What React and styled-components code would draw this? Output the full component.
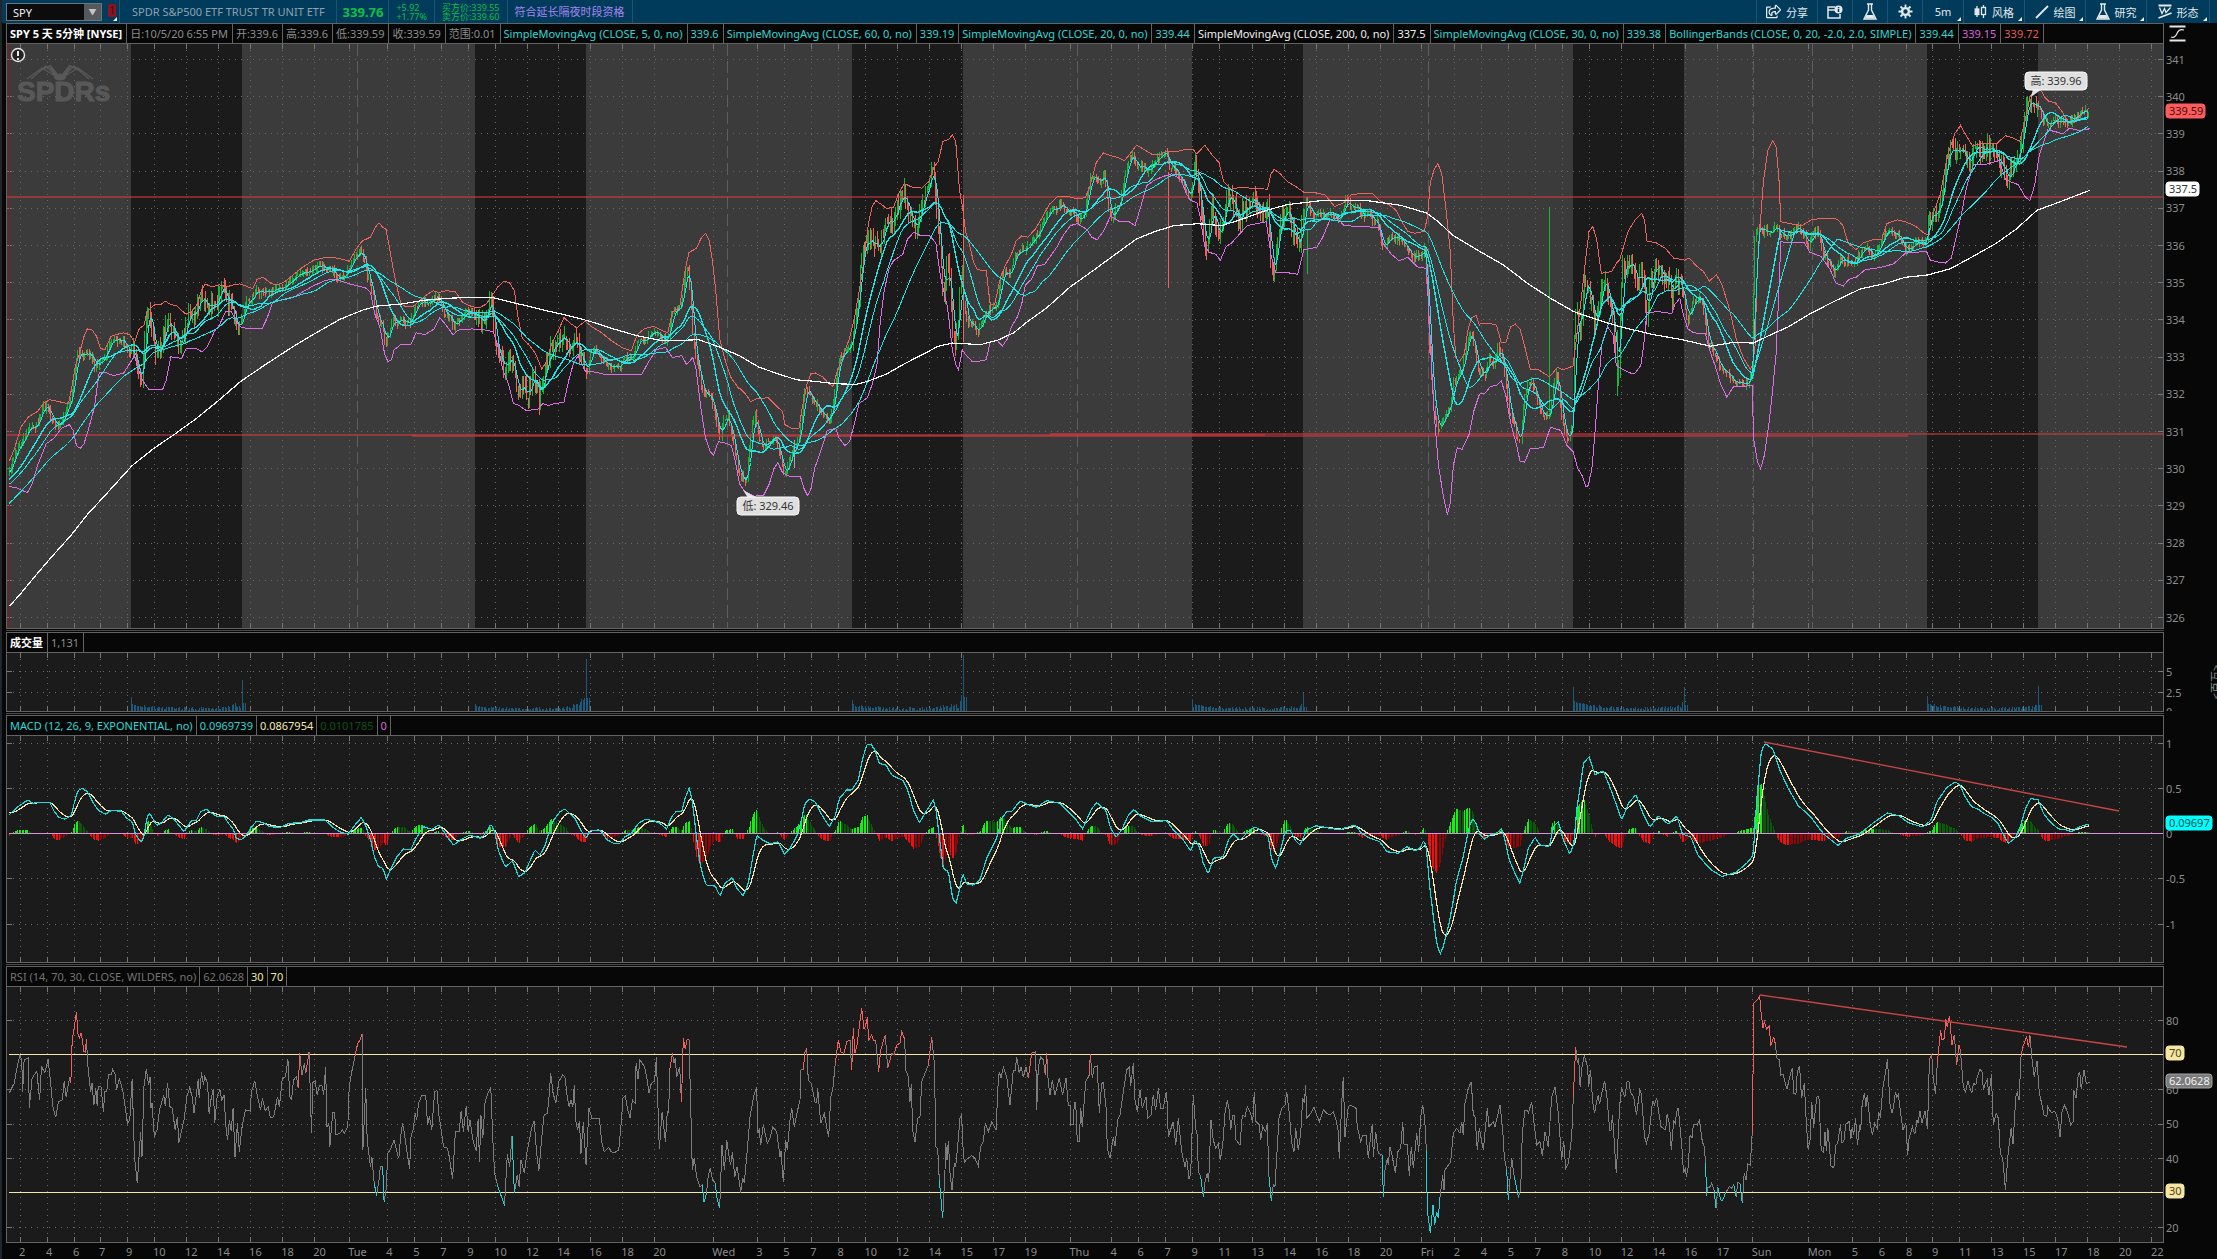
import styled, { createGlobalStyle } from "styled-components";
import { FaRegShareSquare } from "react-icons/fa";

const GlobalStyle = createGlobalStyle`
  :root {
    --toolbar: #003b5b;
    --toolbar-line: #1d5270;
    --ink: #070707;
    --plot: #1b1b1b;
    --line: #636363;
    --gray: #8c8c8c;
    --cyan: #2fd6d6;
    --green: #0fc043;
    --cream: #f3e7ae;
    --violet: #d864dc;
    --red: #e45b56;
  }
  * {
    box-sizing: border-box;
  }
  body {
    margin: 0;
    background: var(--ink);
    font-family: "Noto Sans", "Noto Sans CJK SC", sans-serif;
    font-size: 11px;
  }
  button,
  input {
    font: inherit;
  }
`;

/* ---------- data ---------- */

// Every series is kept as chunks: origin, scale, then "x,y x,y ..." pairs.
const chunk = (ox, kx, oy, ky, text) =>
  text
    .trim()
    .split(/\s+/)
    .map((pair) => {
      const [x, y] = pair.split(",").map(Number);
      return [ox + x / kx, oy + y / ky];
    });

const priceA = (text) => chunk(0, 2.119, 40, 2.613, text);
const priceB = (text) => chunk(740, 2.119, 40, 2.613, text);
const priceC = (text) => chunk(1480, 2.1275, 40, 2.613, text);

const closePoints = [
  ...priceA(`-170,1330 -60,1190 20,1125 30,1080 45,1050 60,1015 75,1010 85,985 90,960 100,960 112,1000 125,1000 135,985 148,950 155,890 162,820 172,820 180,825
    190,815 200,850 212,840 222,835 230,790 245,785 262,785 275,815 285,810 293,890 300,880 305,800 310,700 316,710 322,770 328,815 335,800
    345,780 355,730 362,740 370,775 380,800 390,770 398,720 410,725 420,690 432,665 440,690 450,690 460,680 470,660 478,675 490,700 497,740
    505,750 513,720 520,690 530,680 540,655 550,665 565,655 580,660 595,650 610,630 625,620 640,605 655,600 670,590 690,590 705,605 715,620
    730,615 742,590 752,565 765,548 772,580 778,620 788,660 798,730 808,740 815,800 822,770 830,730 840,740 850,720 860,745 870,735 880,700
    890,680 905,690 920,670 930,670 940,710 950,720 962,750 972,730 985,715 1000,715 1012,740 1025,730 1035,690 1042,670 1050,790 1058,830
    1068,860 1078,830 1085,850 1095,930 1105,915 1118,930 1128,880 1135,880 1142,940 1150,890 1158,850 1168,800 1180,800 1190,765 1200,780
    1208,800 1218,770 1228,830 1235,830 1243,870 1250,820 1262,810 1275,830 1285,850 1300,855 1315,850 1325,825 1340,830 1350,790 1362,785
    1375,775 1390,765 1405,785 1415,785 1422,720 1435,700 1443,690 1450,620 1457,585 1462,650 1468,790 1475,840 1485,900 1495,930 1502,925
    1512,960 1520,1010 1525,1050 1532,990 1542,985 1552,1040 1560,1100`),
  ...priceB(`0,1150 5,1140 12,1160 18,1080 25,1000 32,980 38,1040 45,1060 55,1055 65,1050 75,1045 85,1090 92,1140 100,1110 110,1070 118,1060 125,1040
    132,960 138,900 145,930 155,945 165,960 175,975 185,1000 192,985 198,930 205,860 212,830 220,820 230,800 238,790 242,710 250,690 256,560
    263,545 270,520 278,520 285,540 295,550 303,490 310,480 320,480 330,450 340,420 347,400 354,430 362,450 370,500 378,480 386,440 395,400
    403,360 410,335 415,430 420,500 426,610 432,690 438,570 443,590 450,790 456,780 462,720 467,620 470,560 474,700 480,730 487,745 495,740
    503,770 510,740 520,715 530,700 545,690 552,620 562,605 570,625 580,570 592,550 605,550 618,530 632,500 645,470 655,450 668,445 680,430
    690,445 705,450 718,480 728,455 735,410 742,360 752,350 762,380 772,345 780,440 787,465 797,440 805,420 813,360 822,320 832,300 840,340
    850,330 860,345 870,330 880,310 890,305 902,300 912,340 920,335 930,350 940,375 950,420 958,380 963,300 968,360 975,440 983,530 990,540
    1000,440 1010,500 1018,510 1025,440 1035,410 1045,430 1057,480 1065,440 1078,440 1088,405 1098,430 1108,460 1118,440 1124,610 1130,600
    1137,540 1145,480 1153,450 1160,430 1168,490 1180,530 1188,520 1198,410 1207,450 1220,460 1235,450 1255,455 1270,470 1282,420 1295,440
    1305,430 1318,460 1335,460 1350,480 1362,550 1372,520 1385,515 1398,520 1412,540 1425,570 1440,565 1452,545 1457,720 1463,880 1470,960
    1478,1020 1485,1000 1495,970 1502,970 1510,900 1520,880 1530,860 1540,790 1550,760 1558,830 1565,880`),
  ...priceC(`0,850 8,880 18,830 28,850 38,800 48,840 55,900 62,980 70,990 78,1040 85,1050 92,950 100,900 110,890 118,930 128,970 140,990 150,970
    156,890 164,870 170,960 178,1020 186,1050 193,1020 198,960 201,720 208,710 213,780 220,640 228,640 236,680 243,750 252,680 265,620 275,690
    283,720 288,840 293,890 297,720 302,580 310,590 318,580 325,590 335,640 343,580 350,680 356,720 362,640 370,600 380,590 390,630 400,620
    408,680 415,620 425,630 433,670 440,740 450,690 460,680 470,670 477,720 483,790 492,800 502,830 512,860 522,865 532,880 545,895 560,900
    572,890 579,870 582,530 590,490 600,500 615,500 628,490 640,505 655,515 665,500 680,490 692,520 700,540 708,500 718,500 726,550 740,580
    752,610 765,575 780,575 795,585 808,555 820,540 835,560 850,545 862,500 870,490 882,510 892,510 902,545 915,545 930,530 948,530 953,470
    962,460 972,470 982,400 990,330 1000,290 1010,300 1020,285 1032,315 1045,300 1060,285 1075,285 1090,290 1102,310 1112,340 1118,370
    1128,345 1138,300 1148,290 1156,210 1163,180 1170,160 1180,190 1188,170 1198,215 1210,215 1225,215 1240,215 1255,215 1268,200 1280,185
    1295,190`),
];

const upperBand = [
  ...priceA(`20,1100 30,1070 45,1010 60,985 80,970 92,950 105,940 125,945 145,950 152,910 160,850 168,820 178,775 185,755 195,757 205,775 213,805
    222,810 235,775 245,770 262,765 275,770 285,790 295,755 305,745 312,710 320,700 330,690 342,690 350,682 360,690 375,695 392,715 405,712
    418,690 428,650 435,638 450,645 465,640 480,645 495,640 508,637 525,645 535,650 545,625 558,620 575,637 590,640 605,630 620,615 640,595
    665,575 690,568 715,570 740,578 755,545 768,525 785,515 795,490 803,478 810,488 818,495 825,540 832,590 840,640 850,690 860,697 875,697
    890,680 905,665 918,655 930,660 945,655 965,658 980,685 1000,697 1015,700 1030,690 1042,670 1055,645 1068,630 1080,635 1090,655 1097,720
    1107,780 1120,795 1135,820 1148,860 1158,840 1170,790 1183,760 1195,725 1208,740 1222,752 1240,735 1255,750 1275,765 1295,785 1320,805
    1338,812 1350,770 1365,755 1385,748 1405,760 1415,765 1425,710 1440,700 1452,600 1460,555 1475,545 1487,515 1495,505 1503,525 1510,580
    1517,660 1525,780 1535,830 1548,880 1565,910`),
  ...priceB(`0,910 15,930 22,945 35,937 60,935 80,960 90,970 95,1005 110,1015 125,1015 132,960 142,900 150,872 160,870 175,880 188,898 197,905 205,870
    220,820 232,780 242,730 252,660 260,600 272,480 280,435 288,420 300,430 310,440 325,437 337,400 348,375 365,385 385,387 400,370 412,330
    420,318 430,265 442,260 450,248 457,265 465,390 472,440 478,500 485,530 495,580 503,600 522,603 530,690 540,690 552,620 562,590 575,560
    585,525 597,512 610,515 625,495 640,465 655,430 672,410 690,408 715,415 732,412 742,380 755,320 770,295 785,302 800,307 815,315 825,300
    840,275 855,285 875,300 890,300 905,290 925,292 945,285 960,285 968,298 985,275 1000,300 1015,320 1025,370 1040,390 1060,385 1080,387
    1100,388 1118,390 1125,350 1132,338 1145,350 1160,370 1180,385 1195,398 1215,398 1240,405 1260,435 1280,425 1295,405 1320,400 1340,400
    1355,420 1375,430 1390,445 1405,480 1415,500 1430,505 1450,500 1457,460 1463,370 1472,335 1479,323 1487,350 1495,430 1505,550 1512,750
    1517,830 1525,840 1535,820 1542,760 1550,725 1560,720 1567,745`),
  ...priceC(`0,742 20,740 35,745 45,790 55,790 65,750 75,742 85,755 95,800 107,860 125,862 148,880 165,855 175,862 198,852 205,780 215,680 225,570
    232,500 240,487 248,520 258,610 280,605 292,580 297,575 303,550 315,500 330,470 344,453 350,470 355,525 375,530 395,545 412,570 435,575
    445,570 460,590 475,605 488,630 503,613 515,640 530,700 545,780 560,830 575,860 580,850 585,800 590,600 597,470 603,370 612,290 623,262
    630,280 636,360 640,475 660,480 685,485 705,470 730,465 760,468 772,485 783,530 800,548 815,530 835,522 855,520 865,480 888,470 905,475
    925,485 945,505 955,510 965,450 980,400 995,300 1010,245 1022,223 1032,245 1048,277 1070,270 1100,270 1118,250 1132,255 1148,265
    1160,210 1170,150 1180,130 1190,125 1202,150 1210,160 1225,165 1240,190 1250,212 1265,215 1280,195 1297,177`),
];

const lowerBand = [
  ...priceA(`20,1167 35,1170 58,1183 68,1160 80,1110 98,1055 115,1040 130,1015 147,1005 155,1020 162,1060 170,1067 178,1055 188,1015 200,960 210,870
    222,868 240,877 262,870 275,845 285,825 293,860 302,890 315,912 345,912 352,890 362,828 385,832 395,805 415,805 428,815 440,800 455,760
    465,745 478,710 490,710 500,735 512,752 555,755 565,730 578,685 595,680 625,670 660,645 690,628 712,625 740,637 775,648 785,660 795,720
    805,750 815,820 822,840 830,835 835,810 850,795 870,797 882,765 900,770 920,755 932,725 945,745 960,770 970,758 1000,755 1025,757 1045,762
    1055,800 1065,860 1078,900 1088,950 1100,955 1115,968 1140,965 1150,950 1162,955 1175,950 1195,947 1205,890 1215,845 1225,825 1240,865
    1262,868 1285,875 1325,875 1360,873 1375,840 1390,810 1410,803 1425,830 1445,825 1455,848 1468,830 1475,860 1485,960 1495,1040 1505,1075
    1512,1085 1522,1050 1535,1052 1550,1060 1558,1100 1567,1160`),
  ...priceB(`10,1180 30,1192 50,1190 62,1160 72,1120 80,1105 90,1130 105,1140 128,1140 135,1170 143,1190 150,1175 158,1120 172,1070 185,1020 203,1015
    210,1040 222,1060 232,1050 243,1000 252,950 270,935 280,900 290,850 297,740 305,660 315,600 325,577 345,560 355,520 368,503 385,512
    402,512 415,530 425,620 440,700 450,810 458,850 463,862 471,810 480,825 492,840 505,840 522,835 530,790 545,785 556,800 567,780 575,750
    587,725 597,690 605,640 618,625 630,590 645,587 658,565 672,540 685,510 700,485 715,480 735,495 745,515 757,522 770,500 785,460 805,475
    825,475 837,485 848,440 862,380 880,365 900,355 915,350 935,365 945,400 955,420 968,425 975,460 985,540 995,555 1008,560 1018,575
    1030,540 1042,530 1060,505 1075,485 1095,480 1115,475 1125,560 1135,607 1160,608 1182,612 1195,548 1222,542 1235,515 1250,470 1265,465
    1280,485 1310,487 1355,490 1362,530 1380,560 1397,577 1415,568 1435,593 1455,597 1460,720 1470,960 1480,1110 1490,1190 1499,1240
    1505,1210 1512,1110 1520,1065 1530,1070 1545,1030 1555,970 1567,925`),
  ...priceC(`0,925 12,922 22,905 35,903 45,890 55,930 65,1000 78,1060 85,1100 95,1103 107,1068 135,1065 150,1012 172,1020 185,1060 198,1075 208,1120
    218,1140 225,1167 230,1165 238,1120 245,1020 252,900 260,790 272,750 283,770 290,850 300,858 320,870 330,870 342,850 348,800 355,712
    380,710 408,715 415,690 425,675 433,720 442,755 455,765 480,768 487,805 500,850 512,900 525,933 540,905 560,905 579,903 582,1040
    590,1100 597,1120 605,1085 615,1000 622,920 630,820 635,680 640,527 660,530 690,530 702,555 725,565 745,600 757,635 773,643 785,625
    800,620 820,600 850,595 880,585 905,557 950,552 958,575 975,580 990,583 1003,570 1012,520 1025,450 1035,385 1050,325 1075,325 1105,315
    1118,365 1145,378 1160,410 1170,420 1180,380 1190,300 1200,265 1208,235 1225,240 1240,245 1255,230 1275,237 1297,232`),
];

const average200 = [
  ...priceA(`20,1480 45,1445 75,1400 110,1350 150,1295 185,1240 230,1180 280,1112 325,1068 370,1030 415,990 460,945 510,892 560,850 620,802 670,765
    720,730 770,705 800,695 850,690 900,680 950,675 1000,672 1045,673 1090,687 1150,705 1210,722 1250,735 1300,755 1350,773 1400,785
    1440,785 1480,783 1520,800 1567,825`),
  ...priceB(`40,855 80,872 120,888 160,892 200,898 245,900 270,892 310,873 350,845 390,820 420,800 450,792 510,796 545,785 580,765 610,735 650,700
    700,645 740,610 790,565 840,520 880,500 920,485 970,480 1020,485 1060,470 1110,447 1160,430 1230,420 1330,420 1400,432 1455,452
    1480,475 1510,510 1567,552`),
  ...priceC(`50,588 100,635 150,675 200,710 260,735 300,750 370,770 430,783 490,800 540,790 582,792 610,775 655,750 700,717 750,685 810,650
    860,637 905,620 952,614 1000,598 1050,565 1100,530 1140,495 1185,445 1240,420 1297,393`),
];

const macdPoints = [
  ...chunk(0, 2.8, 620, 3, `25,585 50,560 78,540 90,550 110,547 140,548 152,575 165,592 182,598 200,585 210,540 218,512 230,505 245,515 262,550
    275,570 295,583 310,572 340,573 355,595 370,605 380,645 396,667 402,655 412,590 420,580 430,600 440,617 455,605 470,585 485,595 500,615
    515,635 525,620 535,603 550,600 562,575 578,567 590,578 610,590 628,590 640,610 652,625 662,655 675,660 690,645 705,620 718,604 735,607
    755,620 785,622 810,610 840,608 865,600 910,600 930,620 950,635 975,643 990,620 1012,592 1025,620 1038,660 1048,710 1060,740 1072,745
    1082,777 1095,745 1110,712 1130,687 1150,690 1165,655 1185,620 1210,628 1228,615 1240,630 1255,655 1270,675 1290,660 1315,645 1345,655
    1360,640 1375,612 1385,635 1395,690 1415,742 1435,722 1452,770 1470,758 1485,720 1498,690 1512,705 1525,680 1545,610`),
  ...chunk(550, 3, 730, 3, `10,272 30,245 45,237 60,252 75,265 95,305 108,325 120,302 145,300 155,305 170,328 190,340 210,340 225,320 245,310 265,280
    285,268 310,272 330,280 350,298 365,260 380,243 395,245 405,205 418,173 428,220 438,310 450,400 460,440 470,467 495,467 510,498 525,460
    547,443 560,475 580,497 595,460 605,400 620,317 635,328 660,342 685,335 703,373 720,355 740,320 752,280 765,220 778,207 795,215 810,245
    825,270 838,290 855,260 868,205 890,180 905,180 925,150 938,85 950,45 962,42 975,60 988,100 1008,105 1025,135 1060,152 1075,185
    1090,240 1108,278 1125,250 1150,210 1158,240 1168,320 1180,415 1195,425 1208,505 1218,520 1228,480 1238,430 1250,462 1270,465 1290,450
    1310,385 1340,325 1355,265 1370,245 1385,245 1410,213 1430,222 1460,232 1490,212 1530,220`),
  ...chunk(1060, 3, 730, 3, `5,225 20,240 45,265 68,297 80,270 95,235 112,217 125,232 138,240 150,290 168,322 185,300 205,255 222,238 240,257
    275,275 320,272 340,300 370,330 392,362 405,330 418,350 430,400 445,432 460,385 490,380 505,330 520,312 540,330 565,305 585,290 600,300
    625,320 635,390 648,415 660,370 675,305 690,300 705,330 720,345 740,300 768,287 800,293 840,300 860,292 885,285 905,310 930,325 960,335
    980,365 1015,370 1040,350 1065,362 1080,355 1092,330 1100,360 1108,460 1120,560 1130,640 1140,673 1150,650 1165,590 1175,540 1190,450
    1210,380 1225,300 1237,265 1248,280 1258,310 1272,328 1290,315 1310,310 1325,295 1335,330 1348,390 1365,430 1380,460 1395,400 1405,355
    1425,322 1440,345 1468,350 1480,290 1495,275 1510,330 1530,373 1542,340 1550,240 1560,175`),
  ...chunk(0, 0.7073, 0, 0.7073, `1120,540 1124,535 1128,548 1134,545 1140,560 1147,580 1152,568 1157,562 1162,575 1167,585 1173,577 1180,583 1186,577
    1190,590 1196,592 1201,605 1210,615 1218,620 1228,617 1236,610 1240,605 1243,560 1246,530 1249,526 1254,530 1259,545 1265,558 1272,570
    1280,577 1290,590 1300,598 1306,593 1315,590 1325,582 1335,575 1343,577 1350,582 1360,585 1366,580 1370,567 1377,557 1383,553`),
  ...chunk(1960, 3, 620, 3, `0,495 15,530 35,560 55,568 75,582 95,592 115,612 128,640 145,670 165,655 180,625 195,570 212,535 235,540 250,580
    270,605 295,627 320,630 335,635 355,622 375,615 388,614`),
];

const rsiPoints = [
  ...chunk(0, 2.119, 960, 3, `20,398 30,370 35,330 42,285 46,300 48,395 51,300 60,293 62,443 68,355 78,333 84,420 88,320 95,338 102,298 106,350
    112,440 118,472 124,425 132,420 136,363 140,410 148,350 150,370 153,240 157,205 162,157 165,220 168,235 172,218 178,275 181,277 183,238
    187,330 192,395 195,370 199,435 203,385 206,437 208,380 214,380 219,455 222,395 226,395 230,343 236,343 239,328 244,343 247,390 253,357
    260,390 265,440 270,490 275,480 280,357 285,590 291,670 298,517 301,590 305,380 310,328 315,375 318,350 320,445 322,430 327,528 333,510
    338,450 347,405 350,437 355,370 360,440 365,445 371,510 376,472 379,548 385,510 390,480 396,410 402,382 407,410 411,458 415,415 420,357
    422,415 427,337 431,375 434,350 440,370 443,462 447,420 452,387 455,490 460,410 466,388 470,420 475,405 478,490 482,540 486,480 490,512
    494,445 498,592 503,490 507,575 513,500 520,450 530,453 533,395 540,362 545,405 552,450 556,415 562,452 568,440 573,473 580,470 588,410
    592,440 598,357 605,350 610,297 614,410 618,418 622,360 628,350 632,385 635,280 640,345 645,310 648,340 655,275 660,520 663,368 668,362
    672,405 677,375 682,375 686,405 690,320 693,500 697,490 699,560 705,458 709,458 712,525 720,520 726,510 730,520 737,500 740,380 746,330
    752,290 758,250 763,240 767,222 769,570 775,385 778,540 785,620 788,590 793,670 798,707 803,660 806,620 811,620 814,727 818,690 822,580
    828,565 835,540 840,570 845,595 849,530 853,490 857,520 861,560 868,628 871,530 876,505 880,460 883,480 887,430 894,405 902,405 906,495
    910,468 915,510 921,395 926,392 930,465 935,510 940,560 948,565 952,590 959,658 965,515 973,515 977,453 982,515 988,438 992,515 996,480
    1002,540 1009,572 1013,478 1016,605 1019,465 1023,535 1028,425 1034,400 1040,382 1044,530 1048,640 1054,675 1062,708 1069,737 1075,583
    1080,620 1085,527 1090,700 1096,645 1100,680 1104,600 1111,640 1117,575 1122,540 1126,505 1132,482 1137,580 1142,632 1148,530 1153,465
    1160,460 1163,420 1167,340 1172,400 1178,430 1184,365 1192,345 1197,350 1202,410 1206,440 1210,420 1214,440 1217,375 1220,480 1224,510
    1228,483 1231,583 1236,485 1242,615 1248,443 1254,475 1270,475 1275,545 1280,575 1290,562 1295,575 1302,578 1311,570 1317,480 1320,415
    1325,407 1330,450 1335,473 1340,420 1346,430 1348,308 1352,358 1356,300 1366,320 1372,365 1375,400 1380,370 1387,363 1391,292 1397,568
    1403,455 1410,545 1414,455 1417,457 1419,330 1425,280 1428,310 1431,295 1434,350 1440,320 1444,425 1448,235 1452,268 1456,238 1460,240
    1463,400 1467,630 1471,595 1476,650 1483,680 1488,675 1492,727 1497,700 1500,655 1505,625 1510,660 1515,668 1520,720 1525,743 1530,555
    1535,630 1540,540 1545,590 1548,615 1552,577 1557,650 1562,620 1567,670`),
  ...chunk(550, 3, 730, 3, `572,1388 578,1345 583,1360 592,1260 600,1160 612,1095 620,1070 623,1210 628,1200 632,1245 640,1185 652,1240 660,1225
    668,1190 680,1205 690,1280 693,1262 700,1357 707,1230 712,1260 720,1170 725,1135 733,1190 742,1145 750,1110 753,1020 760,1018 765,965
    770,955 775,1050 783,1060 788,1080 795,1117 800,1117 803,1075 812,1180 823,1150 828,1180 836,1222 842,1100 848,1080 856,1000 865,930
    872,965 882,970 890,935 900,930 905,1020 910,895 915,970 922,940 928,890 935,835 942,898 947,885 952,862 956,930 965,915 970,930
    977,932 982,985 986,1025 992,960 998,940 1006,915 1013,1015 1025,970 1032,975 1040,945 1050,940 1055,905 1064,928 1067,1020 1075,1040
    1080,1115 1084,1062 1088,1200 1095,1235 1103,1165 1110,1160 1115,1055 1125,1030 1135,1005 1145,922 1153,1000 1158,1250 1163,1258
    1168,1350 1178,1465 1185,1320 1187,1240 1191,1290 1195,1232 1200,1330 1206,1380 1213,1300 1217,1310 1222,1260 1230,1165 1235,1155
    1238,1240 1243,1298 1250,1288 1265,1277 1275,1285 1285,1308 1292,1250 1300,1235 1306,1180 1315,1205 1325,1175 1338,1200 1345,1050
    1348,1025 1353,1045 1360,1012 1370,1040 1380,1125 1390,1020 1396,1020 1400,980 1408,1030 1413,1010 1420,1042 1428,1010 1435,1045
    1445,970 1457,965 1460,1140 1465,1010 1472,980 1480,990 1486,1035 1490,970 1495,1060 1500,1095 1507,1050 1515,1095 1528,1045 1538,1095
    1548,1045 1555,1125`),
  ...chunk(1060, 3, 730, 3, `30,1125 33,1183 40,1183 43,1118 47,1118 52,1235 58,1235 62,1133 67,1190 77,1055 88,1035 91,972 97,1045 103,1010 112,1008
    118,1150 125,1060 130,1058 138,1130 142,1255 150,1285 160,1222 165,1248 173,1170 180,1155 190,1085 200,1020 208,1012 212,1068 220,1000
    225,1110 232,1145 240,1080 247,1135 258,1100 263,1165 273,1155 280,1095 287,1140 295,1075 302,1135 310,1135 317,1090 320,1088 325,1220
    340,1175 347,1245 355,1165 365,1265 375,1310 380,1285 387,1348 392,1330 400,1095 407,1195 412,1215 415,1325 422,1340 430,1400 436,1350
    442,1330 446,1355 453,1170 460,1230 467,1255 475,1240 481,1290 488,1245 495,1150 502,1110 508,1140 512,1200 518,1155 523,1155 528,1230
    540,1245 547,1155 555,1160 562,1130 572,1150 578,1180 583,1085 588,1175 598,1185 602,1230 608,1190 617,1205 622,1180 627,1340 634,1413
    640,1365 645,1370 652,1250 657,1165 665,1135 675,1125 680,1085 688,1150 695,1240 702,1265 707,1195 715,1260 722,1210 728,1105 733,1118
    737,1065 740,1165 752,1150 762,1130 770,1155 778,1175 790,1140 800,1150 810,1155 820,1145 828,1170 834,1200 838,1285 845,1120 850,1040
    855,1220 865,1130 872,1125 888,1135 892,1190 902,1235 908,1215 918,1215 925,1283 933,1210 937,1183 940,1280 947,1205 955,1270 967,1275
    970,1400 975,1320 982,1285 985,1305 990,1250 997,1280 1006,1328 1013,1265 1022,1255 1028,1175 1032,1242 1042,1242 1048,1338 1054,1250
    1060,1315 1070,1210 1076,1265 1082,1160 1088,1125 1094,1165 1099,1260 1102,1440 1111,1510 1119,1425 1124,1485 1130,1445 1135,1465
    1140,1400 1148,1335 1152,1380 1155,1320 1172,1295 1180,1210 1190,1195 1200,1210 1205,1175 1210,1215 1215,1120 1225,1075 1234,1055
    1240,1155 1245,1160 1252,1260 1258,1195 1270,1260 1282,1135 1287,1190 1300,1175 1305,1190 1320,1125 1328,1200 1333,1280 1340,1320
    1345,1410 1355,1285 1363,1340 1375,1400 1382,1380 1387,1210 1395,1140 1402,1140 1405,1150 1415,1115 1422,1180 1430,1245 1440,1235
    1447,1278 1455,1205 1465,1250 1475,1100 1485,1070 1495,1150 1505,1290 1511,1232 1517,1315 1525,1300 1535,1220 1540,1100 1547,950
    1552,1000 1556,985`),
  ...chunk(1480, 2.1275, 960, 3, `213,380 217,320 222,288 229,320 231,382 235,330 240,430 244,460 248,425 252,405 254,433 265,362 270,410 276,512
    279,510 282,465 290,640 297,440 301,382 308,412 313,365 317,365 320,395 327,412 333,465 340,390 343,400 347,470 350,530 354,550 360,520
    367,425 371,435 376,415 385,500 395,510 398,462 403,490 407,570 412,480 415,490 420,445 422,447 430,570 433,640 437,625 439,652 443,620
    447,525 451,535 454,493 462,495 467,480 473,545 477,560 480,610 482,708 484,683 490,680 493,668 498,690 502,745 506,680 512,720 516,722
    522,700 530,680 536,685 540,675 545,710 548,668 553,670 558,730 562,640 566,660 570,612 575,615 579,520 583,130 590,120 595,108 598,160
    602,203 605,185 610,208 616,197 618,258 625,232 628,250 632,295 637,300 640,345 645,343 653,388 660,345 664,325 668,400 672,405 675,335
    680,318 684,415 690,370 694,480 698,568 702,540 706,427 710,503 714,440 717,410 721,410 726,570 731,578 734,515 737,573 740,503 747,620
    753,622 757,555 761,550 767,493 770,547 774,545 778,493 782,490 785,482 789,537 792,500 795,525 799,475 803,555 808,495 810,510 813,435
    818,398 821,440 824,405 830,490 835,525 840,490 845,505 848,460 852,470 857,385 860,360 867,298 872,430 876,460 880,440 884,395 887,412
    890,403 895,460 900,510 906,488 910,585 913,535 920,500 925,523 930,480 932,490 936,452 940,490 947,452 952,508 956,300 961,282 964,350
    969,403 973,310 980,210 983,240 988,235 991,177 994,200 999,167 1004,255 1009,225 1014,315 1019,255 1022,270 1028,375 1033,398 1038,363
    1046,400 1050,370 1055,375 1058,350 1064,328 1068,335 1071,390 1075,370 1079,360 1083,405 1088,343 1092,495 1098,460 1103,475 1107,580
    1112,595 1118,690 1123,590 1130,505 1134,553 1140,410 1143,398 1147,420 1151,290 1155,260 1163,230 1167,262 1170,225 1174,290 1179,350
    1185,303 1190,400 1195,430 1200,465 1206,470 1208,440 1215,457 1223,455 1229,475 1234,532 1238,457 1243,435 1250,455 1257,495 1262,485
    1263,390 1268,415 1273,340 1276,337 1279,388 1285,330 1290,372 1297,367`),
];

const BAR = 1.42;
const SESSIONS = [
  { from: 131, to: 242, open: 14, close: 31 },
  { from: 475, to: 586, open: 7, close: 52 },
  { from: 852, to: 963, open: 11, close: 56 },
  { from: 1192, to: 1303, open: 12, close: 18 },
  { from: 1573, to: 1684, open: 24, close: 24 },
  { from: 1927, to: 2038, open: 15, close: 25 },
];

let seed = 7;
const random = () => {
  seed = (seed * 16807) % 2147483647;
  return seed / 2147483647;
};

const resample = (points) => {
  const out = [];
  let i = 0;
  const last = points[points.length - 1][0];
  for (let x = points[0][0]; x <= last; x += BAR) {
    while (i < points.length - 2 && points[i + 1][0] < x) i += 1;
    const [x1, y1] = points[i];
    const [x2, y2] = points[i + 1];
    out.push([x, y1 + ((y2 - y1) * (x - x1)) / (x2 - x1 || 1)]);
  }
  return out;
};

const movingAverage = (series, length) =>
  series
    .map(([x], i) => {
      const part = series.slice(Math.max(0, i - length + 1), i + 1);
      return [x, part.reduce((sum, p) => sum + p[1], 0) / part.length];
    })
    .filter(([x]) => x >= 9);

const inSession = (x) => SESSIONS.some((s) => x >= s.from && x < s.to);

const closes = resample(closePoints).map(([x, y]) => [
  x,
  y + (random() - 0.5) * (inSession(x) ? 14 : 6),
]);

const candles = closes
  .map(([x, close], i) => {
    const open = i ? closes[i - 1][1] : close;
    const reach = inSession(x) ? 11 : 5;
    return {
      x: Math.round(x) + 0.5,
      up: close < open,
      top: Math.min(open, close) - random() * reach,
      bottom: Math.max(open, close) + random() * reach,
    };
  })
  .filter(({ x }) => x >= 9);

const macdLine = resample(macdPoints);
const signalLine = macdLine.reduce((out, [x, y], i) => {
  const before = i ? out[i - 1][1] : 812;
  out.push([x, before + (y - before) * 0.2]);
  return out;
}, []);
const ZERO = 833.5;
const histogram = macdLine.map(([x, y], i) => {
  const value = signalLine[i][1] - y;
  const before = i ? signalLine[i - 1][1] - macdLine[i - 1][1] : value;
  const growing = Math.abs(value) >= Math.abs(before);
  return {
    x,
    value,
    color: value > 0 ? (growing ? "#11f211" : "#0a5a0a") : growing ? "#f01010" : "#8c0808",
  };
});

const volumes = SESSIONS.flatMap(({ from, to, open, close }) => {
  const bars = [];
  for (let x = from; x < to + 3; x += BAR) {
    const t = (x - from) / (to - from);
    let h = 1 + random() * 3 + open * 0.3 * Math.exp(-t * 6) + close * 0.35 * Math.exp((t - 1) * 12) * random();
    if (x === from) h = open;
    if (x <= to && x + BAR > to) h = close;
    if (t > 1) h = close / 4;
    bars.push([x, h]);
  }
  return bars;
});

// single bars that reach far out of the crowd
const SPIKES = [
  { x: 963.5, y1: 195, y2: 342, color: "#f0645c" },
  { x: 1168.5, y1: 172, y2: 288, color: "#f0645c" },
  { x: 1307.5, y1: 230, y2: 274, color: "#14b83a" },
  { x: 1549.5, y1: 207, y2: 412, color: "#14b83a" },
  { x: 1617.5, y1: 330, y2: 396, color: "#14b83a" },
  { x: 794.5, y1: 440, y2: 468, color: "#a8a8a8" },
];

const TICKS = [
  [20, "2"], [47, "4"], [74, "6"], [100, "7"], [127, "9"], [154, "10"], [186, "12"], [218, "14"], [250, "16"], [282, "18"], [314, "20"],
  [349, "Tue"], [387, "4"], [414, "5"], [441, "7"], [468, "9"], [495, "10"], [527, "12"], [558, "14"], [590, "16"], [622, "18"], [654, "20"],
  [713, "Wed"], [757, "3"], [784, "5"], [811, "7"], [838, "8"], [865, "10"], [897, "12"], [929, "14"], [961, "15"], [993, "17"], [1025, "19"],
  [1070, "Thu"], [1111, "4"], [1138, "6"], [1165, "7"], [1192, "9"], [1219, "11"], [1252, "13"], [1284, "14"], [1316, "16"], [1348, "18"],
  [1380, "20"], [1421, "Fri"], [1454, "2"], [1481, "4"], [1508, "5"], [1535, "7"], [1562, "8"], [1589, "10"], [1621, "12"], [1653, "14"],
  [1685, "16"], [1717, "17"], [1752, "Sun"], [1808, "Mon"], [1852, "5"], [1879, "6"], [1906, "8"], [1932, "9"], [1959, "11"], [1991, "13"],
  [2023, "15"], [2055, "17"], [2087, "18"], [2119, "20"], [2151, "22"],
];
const DAYS = [357, 727, 1077, 1428, 1753, 1812];

const priceY = (value) => 59.5 + (341 - value) * 37.2;
const rsiY = (value) => 1020.5 + (80 - value) * 3.45;

const MAIN = { top: 44, height: 584 };
const VOLUME = { top: 653, height: 58 };
const MACD = { top: 736, height: 226 };
const RSI = { top: 987, height: 255 };
const LEFT = 7;
const WIDTH = 2156;

const priceLabels = Array.from({ length: 16 }, (_, i) => ({ text: String(341 - i), y: priceY(341 - i) }));
const volumeLabels = [
  { text: "5", y: 671.5 },
  { text: "2.5", y: 692.5 },
  { text: "0", y: 712 },
];
const macdLabels = [
  { text: "1", y: 743.5 },
  { text: "0.5", y: 788.5 },
  { text: "0", y: 833.5 },
  { text: "-0.5", y: 878.5 },
  { text: "-1", y: 924.5 },
];
const rsiLabels = [80, 60, 50, 40, 20].map((v) => ({ text: String(v), y: rsiY(v) }));

/* ---------- layout ---------- */

const Page = styled.div`
  display: flex;
  flex-direction: column;
  height: 100vh;
  min-height: 640px;
  overflow: hidden;
  background: var(--ink);
  border-left: 2px solid #1f272b;
  color: var(--gray);
`;

const Toolbar = styled.header`
  display: flex;
  flex: none;
  height: 23px;
  padding-left: 4px;
  background: var(--toolbar);
  color: #d5dde2;
  white-space: nowrap;
`;

const SymbolBox = styled.form`
  display: flex;
  align-items: stretch;
  width: 96px;
  height: 18px;
  margin-top: 3px;
  border: 1px solid #6a7780;
  background: #0c0c0c;

  input {
    flex: 1;
    min-width: 0;
    padding: 0 0 0 6px;
    border: 0;
    outline: 0;
    background: none;
    color: #f0f0f0;
  }
  button {
    width: 17px;
    padding: 0;
    border: 0;
    background: #55595b;
    color: #c4c4c4;
    font-size: 8px;
    line-height: 16px;
  }
`;

const LinkGroup = styled.button`
  display: flex;
  position: relative;
  width: 18px;
  padding: 4px 3px 6px 6px;
  border: 0;
  border-right: 1px solid var(--toolbar-line);
  background: none;
  color: #3a0a0e;

  span {
    flex: 1;
    border-radius: 1px;
    background: #8c1420;
    font-size: 10px;
    line-height: 12px;
  }
`;

const Corner = styled.i`
  position: absolute;
  right: 2px;
  bottom: 2px;
  border-left: 4px solid transparent;
  border-bottom: 4px solid #f2f2f2;
`;

const Quote = styled.div`
  display: flex;
  flex-direction: column;
  justify-content: center;
  padding: ${({ $pad }) => $pad || "0 7px"};
  border-right: 1px solid var(--toolbar-line);
  color: ${({ $color }) => $color};
  font-size: ${({ $size }) => $size || 11}px;
  font-weight: ${({ $bold }) => ($bold ? 700 : 400)};
  line-height: ${({ $line }) => $line || 22}px;
`;

const Tools = styled.nav`
  display: flex;
  margin-left: auto;
  margin-right: 7px;
  border-left: 1px solid var(--toolbar-line);
`;

const ToolButton = styled.button`
  display: flex;
  position: relative;
  align-items: center;
  justify-content: center;
  gap: 5px;
  width: ${({ $width }) => $width}px;
  padding: 0;
  border: 0;
  border-right: 1px solid var(--toolbar-line);
  background: none;
  color: #e4e9ec;

  svg {
    flex: none;
  }
`;

const PanelBox = styled.section`
  display: grid;
  grid-template-columns: minmax(0, 1fr) 53px;
  flex: ${({ $grow }) => $grow} 1 22px;
  min-height: 0;
  margin-left: 4px;
`;

const Frame = styled.div`
  display: flex;
  flex-direction: column;
  min-height: 0;
  border: 1px solid var(--line);
`;

const Divider = styled.div`
  flex: none;
  height: 3px;
  margin: 0 53px 0 4px;
  border-top: 1px solid var(--ink);
  border-bottom: 1px solid var(--ink);
  background: #4a4a4a;
`;

const StudyBar = styled.div`
  display: flex;
  flex: none;
  height: 20px;
  overflow: hidden;
  border-bottom: 1px solid var(--line);
  background: var(--ink);
`;

const StudyCell = styled.span`
  padding: 0 ${({ $tight }) => ($tight ? 3 : 4)}px 0 3px;
  border-right: 1px solid var(--line);
  color: ${({ $color }) => $color || "var(--gray)"};
  font-weight: ${({ $bold }) => ($bold ? 700 : 400)};
  line-height: 19px;
  white-space: nowrap;
`;

const Plot = styled.svg`
  display: block;
  flex: 1;
  width: 100%;
  min-height: 0;
  background: var(--plot);
`;

const AxisColumn = styled.div`
  display: flex;
  flex-direction: column;
  min-height: 0;
`;

const AxisHead = styled.div`
  flex: none;
  height: 21px;
  padding: 2px 0 0 5px;
`;

const ScaleButton = styled.button`
  display: block;
  padding: 0;
  border: 0;
  background: none;
  color: #e6e6e6;
`;

const AxisScale = styled.svg`
  display: block;
  flex: 1;
  width: 100%;
  min-height: 0;
  margin-bottom: 1px;

  text {
    fill: var(--gray);
  }
`;

const TimeScale = styled.svg`
  display: block;
  flex: none;
  width: calc(100% - 58px);
  height: 16px;
  margin-left: 4px;
  overflow: visible;

  text {
    fill: var(--gray);
  }
`;

/* ---------- drawing ---------- */

const path = (points) => "M" + points.map(([x, y]) => `${x.toFixed(1)} ${y.toFixed(1)}`).join("L");

const Line = ({ points, color, width = 1 }) => (
  <path d={path(points)} fill="none" stroke={color} strokeWidth={width} shapeRendering="crispEdges" />
);

const Grid = ({ top, height, levels, dots = "#686868" }) => {
  const bottom = top + height;
  const d = TICKS.map(([x]) => `M${x + 0.5} ${top}V${bottom}`).join("");
  const ends = TICKS.map(([x]) => `M${x + 0.5} ${top}v5M${x + 0.5} ${bottom}v-5`).join("");
  const rows = levels.map((y) => Math.floor(y) + 0.5);
  return (
    <g fill="none" shapeRendering="crispEdges">
      <path d={d} stroke={dots} strokeDasharray="1 5" />
      <path d={rows.map((y) => `M${LEFT} ${y}H${LEFT + WIDTH}`).join("")} stroke={dots} strokeDasharray="1 5" />
      <path d={ends} stroke="#777" />
      <path d={rows.map((y) => `M${LEFT} ${y}h5M${LEFT + WIDTH} ${y}h-5`).join("")} stroke="#777" />
    </g>
  );
};

const Canvas = ({ area, label, children }) => (
  <Plot viewBox={`${LEFT} ${area.top} ${WIDTH} ${area.height}`} preserveAspectRatio="none" role="img" aria-label={label}>
    {children}
  </Plot>
);

const Callout = ({ x, y, tip, text }) => (
  <g>
    <path d={tip} fill="#e0e0e0" />
    <rect x={x} y={y} width="62" height="18" rx="4" fill="#e0e0e0" stroke="#fafafa" />
    <text x={x + 31} y={y + 13} textAnchor="middle" fill="#333">
      {text}
    </text>
  </g>
);

const PriceChart = () => (
  <Canvas area={MAIN} label="SPY 5 分钟">
    <rect x={LEFT} y={MAIN.top} width={WIDTH} height={MAIN.height} fill="#3b3b3b" />
    {SESSIONS.map(({ from, to }) => (
      <rect key={from} x={from} y={MAIN.top} width={to - from} height={MAIN.height} fill="#1b1b1b" />
    ))}
    <Grid {...MAIN} levels={priceLabels.map((l) => l.y)} />
    <path
      d={DAYS.map((x) => `M${x + 0.5} ${MAIN.top}v${MAIN.height}`).join("")}
      stroke="#5e5e5e"
      strokeDasharray="12 5"
      shapeRendering="crispEdges"
    />
    <g fill="#585858" stroke="#585858">
      <text x="17" y="101" fontFamily="Liberation Sans, sans-serif" fontSize="28" fontWeight="700" strokeWidth="1">
        SPDRs
      </text>
      <ellipse cx="60" cy="77" rx="6" ry="3" />
      <path
        d="M55 76L42 68 27 79M55 75L46 66 31 79M56 75L49 66 38 72M57 74L50 65M65 76L78 68 93 79M65 75L74 66 89 79M64 75L71 66 82 72M63 74L70 65"
        fill="none"
        strokeWidth="1.3"
      />
    </g>
    <circle cx="18" cy="55" r="6.5" fill="#222" stroke="#e8e8e8" strokeWidth="1.4" />
    <path d="M18 51v5M18 58v2" stroke="#fff" strokeWidth="1.8" />
    <path d="M9.5 44V628" stroke="#8a1a1c" shapeRendering="crispEdges" />
    <g shapeRendering="crispEdges">
      {candles.map(({ x, up, top, bottom }, i) => (
        <path key={i} d={`M${x} ${top.toFixed(1)}V${bottom.toFixed(1)}`} stroke={up ? "#14b83a" : "#f0645c"} />
      ))}
      {SPIKES.map(({ x, y1, y2, color }) => (
        <path key={x} d={`M${x} ${y1}V${y2}`} stroke={color} />
      ))}
    </g>
    <g stroke="#d03a3e" strokeOpacity="0.75" strokeWidth="1.6">
      <path d="M7 197H2163" />
      <path d="M7 435H1265" />
      <path d="M412 436H1908" />
      <path d="M1050 434H2163" />
    </g>
    <Line points={upperBand} color="#e8665f" />
    <Line points={lowerBand} color="#dc6fe6" />
    <Line points={movingAverage(closes, 60)} color="#1fe5e5" />
    <Line points={movingAverage(closes, 30)} color="#1fe5e5" />
    <Line points={movingAverage(closes, 20)} color="#1fe5e5" width={1.4} />
    <Line points={movingAverage(closes, 5)} color="#1fe5e5" />
    <Line points={average200} color="#fff" width={1.2} />
    <Callout x={2025} y={72} tip="M2031 97L2033 89H2042Z" text="高: 339.96" />
    <Callout x={737} y={497} tip="M743 490L748 498H757Z" text="低: 329.46" />
  </Canvas>
);

const VolumeChart = () => (
  <Canvas area={VOLUME} label="成交量">
    <Grid {...VOLUME} levels={[671, 692]} />
    <path
      d={volumes.map(([x, h]) => `M${Math.round(x) + 0.5} 711v-${h.toFixed(1)}`).join("")}
      stroke="#1b5a7c"
      shapeRendering="crispEdges"
    />
  </Canvas>
);

const MacdChart = () => (
  <Canvas area={MACD} label="MACD">
    <Grid {...MACD} levels={[743.5, 788.5, 878.5, 924.5]} />
    <g shapeRendering="crispEdges">
      {histogram.map(({ x, value, color }) => (
        <path key={x} d={`M${Math.round(x) + 0.5} ${ZERO}v${(-value).toFixed(1)}`} stroke={color} />
      ))}
      <path d={`M9 ${ZERO}H2163`} stroke="#dc8fdc" />
    </g>
    <Line points={signalLine} color="#f3e3b4" width={1.2} />
    <Line points={macdLine} color="#1fd8d8" width={1.2} />
    <path d="M1764 742L2119 811" stroke="#c94545" strokeWidth="1.3" />
  </Canvas>
);

// a bar takes the colour of the zone in which it ends
const rsiZone = (test) =>
  rsiPoints
    .slice(1)
    .map((p, i) => [rsiPoints[i], p])
    .filter(([, end]) => test(end[1]))
    .map(path)
    .join("");

const RsiChart = () => (
  <Canvas area={RSI} label="RSI">
    <Grid {...RSI} levels={rsiLabels.map((l) => l.y)} />
    <path d="M9 1054.5H2163M9 1192.5H2163" stroke="#f3e7ae" shapeRendering="crispEdges" />
    <Line points={rsiPoints} color="#7d7d7d" />
    <g fill="none" shapeRendering="crispEdges">
      <path d={rsiZone((y) => y < rsiY(70))} stroke="#f0605c" />
      <path d={rsiZone((y) => y > rsiY(30))} stroke="#22cfd2" />
    </g>
    <path d="M1760 995L2127 1047" stroke="#c94545" strokeWidth="1.4" />
  </Canvas>
);

/* ---------- parts ---------- */

const Tag = ({ y, text, width, fill, color, edge }) => (
  <svg y={y} overflow="visible">
    <rect x="2" y="-7" width={width} height="14" rx="3" fill={fill} stroke={edge || fill} />
    <text x="5" y="4" style={{ fill: color }}>
      {text}
    </text>
  </svg>
);

const Panel = ({ area, studies, tight, labels, tags = [], unit, head, children }) => {
  const at = (y) => `${((y - area.top) / area.height) * 100}%`;
  return (
    <PanelBox $grow={area.height}>
      <Frame>
        <StudyBar>
          {studies.map(([text, color, bold], i) => (
            <StudyCell key={i} $color={color} $bold={bold} $tight={tight}>
              {text}
            </StudyCell>
          ))}
        </StudyBar>
        {children}
      </Frame>
      <AxisColumn>
        <AxisHead>{head}</AxisHead>
        <AxisScale>
          {labels.map(({ text, y }) => (
            <text key={text} x="2" y={at(y)} dy="4">
              {text}
            </text>
          ))}
          {tags.map((tag) => (
            <Tag key={tag.text} {...tag} y={at(tag.y)} />
          ))}
          {unit && (
            <svg y="50%" overflow="visible">
              <text x="0" y="0" textAnchor="middle" transform="translate(56 0) rotate(-90)">
                {unit}
              </text>
            </svg>
          )}
        </AxisScale>
      </AxisColumn>
    </PanelBox>
  );
};

const FlaskIcon = () => (
  <svg width="14" height="17" viewBox="0 0 14 17" fill="none" stroke="currentColor" strokeWidth="1.4">
    <path d="M4 1h6M5.5 1v6L1 16h12L8.5 7V1" />
    <path d="M3.5 12h7l1.5 3.5H2Z" fill="currentColor" stroke="none" />
  </svg>
);

const InfoWindowIcon = () => (
  <svg width="16" height="14" viewBox="0 0 16 14" fill="none" stroke="currentColor" strokeWidth="1.5">
    <path d="M8 2H1v11h12V9M1 5h7" />
    <circle cx="11.5" cy="4.5" r="4" fill="currentColor" stroke="none" />
    <path d="M11.5 2v1.2M11.5 4v3" stroke="#003b5b" />
  </svg>
);

const GearIcon = () => (
  <svg width="15" height="15" viewBox="0 0 15 15" fill="none" stroke="currentColor">
    <circle cx="7.5" cy="7.5" r="3.4" strokeWidth="2.4" />
    <path
      d="M7.5 0.5v3M7.5 11.5v3M0.5 7.5h3M11.5 7.5h3M2.5 2.5l2 2M10.5 10.5l2 2M12.5 2.5l-2 2M4.5 10.5l-2 2"
      strokeWidth="1.8"
    />
  </svg>
);

const CandleIcon = () => (
  <svg width="13" height="15" viewBox="0 0 13 15" fill="none" stroke="currentColor" strokeWidth="1.3">
    <path d="M3 2v11M9.5 1v13" />
    <rect x="1.2" y="5" width="3.6" height="5.5" fill="currentColor" />
    <rect x="7.5" y="3.5" width="4" height="7" fill="#003b5b" />
  </svg>
);

const SlashIcon = () => (
  <svg width="14" height="14" viewBox="0 0 14 14">
    <path d="M1 13L13 1" stroke="currentColor" strokeWidth="1.8" />
  </svg>
);

const PatternIcon = () => (
  <svg width="14" height="15" viewBox="0 0 14 15" fill="none" stroke="currentColor" strokeWidth="1.3">
    <path d="M0.5 1.5h13M0.5 14l13-5" strokeWidth="1.8" />
    <path d="M1.5 3.5l2.5 6 2.5-5 1.5 4 4.5-5" />
  </svg>
);

const CurveIcon = () => (
  <svg width="17" height="17" viewBox="0 0 17 17" fill="none" stroke="currentColor">
    <path d="M0.5 1.5h16M0.5 15.5h16" strokeWidth="2" />
    <path d="M2 12c3 1 4.500 0 6-3.500S11.500 4 15 5" strokeWidth="1.2" />
  </svg>
);

const tools = [
  { name: "分享", text: "分享", icon: <FaRegShareSquare size={15} />, width: 61 },
  { name: "消息", icon: <InfoWindowIcon />, width: 35 },
  { name: "实验", icon: <FlaskIcon />, width: 35 },
  { name: "设置", icon: <GearIcon />, width: 35 },
  { name: "周期", text: "5m", width: 41, menu: true },
  { name: "风格", text: "风格", icon: <CandleIcon />, width: 61, menu: true },
  { name: "绘图", text: "绘图", icon: <SlashIcon />, width: 61, menu: true },
  { name: "研究", text: "研究", icon: <FlaskIcon />, width: 61, menu: true },
  { name: "形态", text: "形态", icon: <PatternIcon />, width: 63, menu: true },
];

const cyan = "var(--cyan)";
const priceStudies = [
  ["SPY 5 天 5分钟 [NYSE]", "#fff", true],
  ["日:10/5/20 6:55 PM"],
  ["开:339.6"],
  ["高:339.6"],
  ["低:339.59"],
  ["收:339.59"],
  ["范围:0.01"],
  ["SimpleMovingAvg (CLOSE, 5, 0, no)", cyan],
  ["339.6", cyan],
  ["SimpleMovingAvg (CLOSE, 60, 0, no)", cyan],
  ["339.19", cyan],
  ["SimpleMovingAvg (CLOSE, 20, 0, no)", cyan],
  ["339.44", cyan],
  ["SimpleMovingAvg (CLOSE, 200, 0, no)", "#eee"],
  ["337.5", "#eee"],
  ["SimpleMovingAvg (CLOSE, 30, 0, no)", cyan],
  ["339.38", cyan],
  ["BollingerBands (CLOSE, 0, 20, -2.0, 2.0, SIMPLE)", cyan],
  ["339.44", cyan],
  ["339.15", "var(--violet)"],
  ["339.72", "var(--red)"],
];

const App = () => (
  <Page>
    <GlobalStyle />
    <Toolbar>
      <SymbolBox onSubmit={(e) => e.preventDefault()}>
        <input aria-label="代码" defaultValue="SPY" />
        <button type="button" aria-label="最近的代码">
          ▼
        </button>
      </SymbolBox>
      <LinkGroup type="button">
        <span>1</span>
        <Corner />
      </LinkGroup>
      <Quote $color="#8fa1ad" $pad="0 11px 0 12px">
        SPDR S&amp;P500 ETF TRUST TR UNIT ETF
      </Quote>
      <Quote $color="var(--green)" $size={13} $bold $pad="0 5px 0 6px">
        339.76
      </Quote>
      <Quote $color="var(--green)" $size={9} $line={9}>
        <span>+5.92</span>
        <span>+1.77%</span>
      </Quote>
      <Quote $color="var(--green)" $size={9} $line={9}>
        <span>买方价:339.55</span>
        <span>卖方价:339.60</span>
      </Quote>
      <Quote $color="#a884f0" $size={11}>
        符合延长隔夜时段资格
      </Quote>
      <Tools>
        {tools.map(({ name, text, icon, width, menu }) => (
          <ToolButton key={name} type="button" aria-label={name} $width={width}>
            {icon}
            {text}
            {menu && <Corner />}
          </ToolButton>
        ))}
      </Tools>
    </Toolbar>

    <Panel
      area={MAIN}
      studies={priceStudies}
      labels={priceLabels}
      tags={[
        { text: "339.59", y: 111, width: 39, fill: "#fb5c5c", color: "#4a0f0f" },
        { text: "337.5", y: 189, width: 33, fill: "#fff", color: "#333" },
      ]}
      head={
        <ScaleButton type="button" aria-label="刻度">
          <CurveIcon />
        </ScaleButton>
      }
    >
      <PriceChart />
    </Panel>
    <Divider />
    <Panel area={VOLUME} studies={[["成交量", "#fff", true], ["1,131"]]} labels={volumeLabels} unit="<百万>">
      <VolumeChart />
    </Panel>
    <Divider />
    <Panel
      area={MACD}
      tight
      studies={[
        ["MACD (12, 26, 9, EXPONENTIAL, no)", cyan],
        ["0.0969739", cyan],
        ["0.0867954", "var(--cream)"],
        ["0.0101785", "#0f4f14"],
        ["0", "var(--violet)"],
      ]}
      labels={macdLabels}
      tags={[{ text: "0.09697", y: 823, width: 46, fill: "#00ffff", color: "#0a4a4a" }]}
    >
      <MacdChart />
    </Panel>
    <Divider />
    <Panel
      area={RSI}
      tight
      studies={[
        ["RSI (14, 70, 30, CLOSE, WILDERS, no)", "#747474"],
        ["62.0628", "#747474"],
        ["30", "var(--cream)"],
        ["70", "var(--cream)"],
      ]}
      labels={rsiLabels}
      tags={[
        { text: "70", y: 1053, width: 18, fill: "#f6e6a4", color: "#4a4218" },
        { text: "62.0628", y: 1081, width: 46, fill: "#7b7b7b", color: "#f2f2f2", edge: "#a5a5a5" },
        { text: "30", y: 1191, width: 18, fill: "#f6e6a4", color: "#4a4218" },
      ]}
    >
      <RsiChart />
    </Panel>
    <TimeScale>
      {TICKS.map(([x, text]) => (
        <text key={x} x={`${((x - LEFT) / WIDTH) * 100}%`} y="13">
          {text}
        </text>
      ))}
    </TimeScale>
  </Page>
);

export default App;
